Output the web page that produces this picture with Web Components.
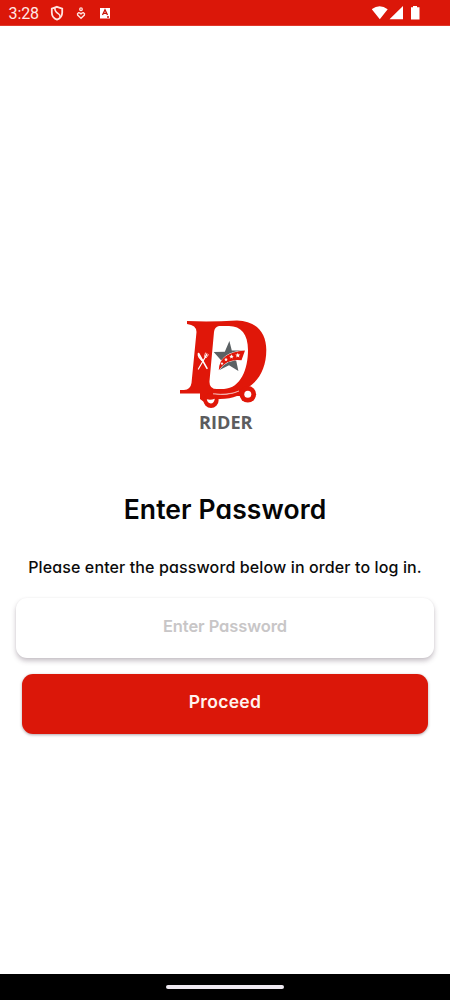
<!DOCTYPE html>
<html lang="en">
<head>
<meta charset="utf-8">
<title>Rider – Enter Password</title>
<style>
html,body{margin:0;height:100%;background:#fff}
body{font-family:Inter,"Open Sans",sans-serif;font-feature-settings:"cv11" 1}
</style>
</head>
<body>
<login-screen></login-screen>
<script>
const define=(name,html)=>customElements.define(name,class extends HTMLElement{
  constructor(){
    super();
    const t=document.createElement('template');
    t.innerHTML=html;
    this.attachShadow({mode:'open'}).append(t.content.cloneNode(true));
  }
});

define('status-bar',`
<style>
:host{display:flex;box-sizing:border-box;height:26px;background:#db1709;color:#fff;padding:0 30px 0 8.5px;justify-content:space-between;align-items:center;border-bottom:1px solid #e0382b}
span{font:400 16px/26px Roboto,sans-serif;width:31px;letter-spacing:-.1px;color:#ffe9e6;padding-top:2px}
div{display:flex;align-items:center}
svg{display:block}
</style>
<div><span>3:28</span>
<svg width="75" height="26" viewBox="0 0 75 26" fill="none" stroke="#ffe3df" style="margin-left:8.5px">
<path d="M9 6.8 14.2 8.6V12.4C14.2 15.8 12.2 18.4 9 19.6C5.8 18.4 3.8 15.8 3.8 12.4V8.6Z" stroke-width="1.8"/><path d="M6.8 7.6Q6.8 12 10 13.4Q12.4 14.8 12.2 17.2" stroke-width="1.6"/>
<circle cx="33" cy="9.2" r="1.3" stroke-width="1.3"/><path d="M33 18.2 29.6 15Q29 13.4 30.4 12.8Q32 12.4 33 14Q34 12.4 35.6 12.8Q37 13.4 36.4 15Z" stroke-width="1.4"/>
<rect x="52" y="8" width="10" height="10.5" fill="#fff" stroke="none"/><path d="M54.5 15 57 9.7 59.5 15M55.3 13.4H58.7M59 17H61" stroke="#c91408" stroke-width="1.3"/>
</svg></div>
<svg width="48" height="26" viewBox="372 0 48 26" fill="#fff"><path d="M371.8 9.2Q379.5 3.3 387.7 9.2L379.8 19.2ZM403 6V19.3H389.5ZM411 7.3H413V6H417V7.3H419.5V19.5H411Z"/></svg>`);

define('rider-logo',`
<style>:host{display:block;width:110px;height:130px}svg{display:block}text{font:700 18px "Open Sans",sans-serif}</style>
<svg width="110" height="130" viewBox="170 310 110 130">
<path fill="#e01709" fill-rule="evenodd" d="M187 321Q210 322 237 320.500C257 321 266.300 333 266.300 350C266.300 368 259 381 247 388L240 396L237 396Q230 399 220 399L204 402L200 399V393.500H180V390H184Q190.500 389.500 191.500 383L196.500 332Q196.500 325 187 324ZM219 326Q214.500 327 214 332L209.500 381Q209 389 217 389H224C241 388 248 369 248 350C248 334 241 326 229 326Z"/>
<circle cx="211" cy="400.500" r="7.600" fill="#e01709"/>
<path d="M213 393.800Q228 395.500 239 391Q229 396 213 393.800Z" fill="#fff" stroke="#fff" stroke-width=".4"/>
<circle cx="247.800" cy="394.300" r="8.300" fill="#e01709"/><circle cx="247.800" cy="394.300" r="3.500" fill="#fff"/>
<path d="M206.800 399.300Q210.500 400.500 214.800 398.800Q214 403.500 210.800 403.500Q207.500 403.300 206.800 399.300Z" fill="#fff"/>
<g stroke="#fff" stroke-linecap="round" fill="none"><path d="M198.400 369 206.800 354.500" stroke-width="1.200"/><path d="M199 354.200 207 368.300" stroke-width="1.600"/><path d="M198.500 353.500Q197.800 357 202.200 360.500" stroke-width="1.600"/><path d="M205.500 353 204.400 356.500 206 358 208.300 354.800M206.900 353.600 205.300 357" stroke-width=".8"/></g>
<path fill="#5b6164" d="M229.400 341 231.800 350.400H244L236 359.800 238.400 371 229 365.200 219.500 370 221 360.300 213.700 352 224.800 351.700Z"/>
<path d="M218.800 370.200Q219 352.500 245 350.600L241.500 360.300Q227 358 218.800 370.200Z" fill="#e01709" stroke="#fff" stroke-width="1" paint-order="stroke"/>
<defs><path id="star" fill="#fff" d="M0-2.600.7-.9 2.500-.8 1.100.4 1.600 2.200 0 1.200-1.600 2.200-1.100.4-2.500-.8-.7-.9Z"/></defs>
<use href="#star" transform="translate(237.800 355.400)"/><use href="#star" transform="translate(231.500 356.600) scale(.9)"/><use href="#star" transform="translate(226 359.500) scale(.75)"/><use href="#star" transform="translate(222 363.500) scale(.65)"/>
<text x="199" y="429" fill="#5c5c5e" textLength="53.500" lengthAdjust="spacingAndGlyphs">RIDER</text>
</svg>`);

define('screen-title',`
<style>:host{display:block;text-align:center}h1{margin:0;font-size:26.5px;line-height:36px;font-weight:600;letter-spacing:.1px;color:#050505;white-space:nowrap}</style><h1><slot></slot></h1>`);
define('screen-hint',`
<style>:host{display:block;text-align:center}p{margin:0;font-size:16px;line-height:24px;font-weight:500;letter-spacing:.12px;color:#0b0b0b;white-space:nowrap}</style><p><slot></slot></p>`);
define('password-field',`
<style>:host{display:flex;box-sizing:border-box;height:60px;margin:0 16px;border-radius:11px;background:#fff;align-items:center;justify-content:center;padding-bottom:4px;font-size:16.5px;font-weight:600;letter-spacing:-.08px;color:#c8c6c7;box-shadow:0 3px 5px rgba(65,45,65,.29),0 0 2px rgba(0,0,0,.05)}</style><slot></slot>`);
define('primary-button',`
<style>:host{display:block;height:60px;margin:0 22px}button{display:flex;width:100%;height:60px;box-sizing:border-box;border:0;padding:0 0 6px;border-radius:11px;background:#db1709;align-items:center;justify-content:center;color:#fff3ef;font:600 17.5px Inter,sans-serif;letter-spacing:.3px;font-feature-settings:inherit;box-shadow:0 1px 3px rgba(60,30,45,.4)}</style><button><slot></slot></button>`);
define('nav-bar',`
<style>:host{display:flex;height:26px;background:#000;justify-content:center;align-items:center}i{width:118px;height:4.5px;border-radius:3px;background:#eee9f1}</style><i></i>`);
define('login-screen',`
<style>
:host{display:flex;flex-direction:column;height:1000px;width:450px;background:#fff;overflow:hidden}
main{flex:1;display:flex;flex-direction:column;padding-top:284px}
rider-logo{margin-left:170px}
screen-title{margin-top:51px}
screen-hint{margin-top:28px}
password-field{margin-top:19px}
primary-button{margin-top:16px}
</style>
<status-bar></status-bar>
<main><rider-logo></rider-logo><screen-title>Enter Password</screen-title><screen-hint>Please enter the password below in order to log in.</screen-hint><password-field>Enter Password</password-field><primary-button>Proceed</primary-button></main>
<nav-bar></nav-bar>`);
</script>
</body>
</html>
